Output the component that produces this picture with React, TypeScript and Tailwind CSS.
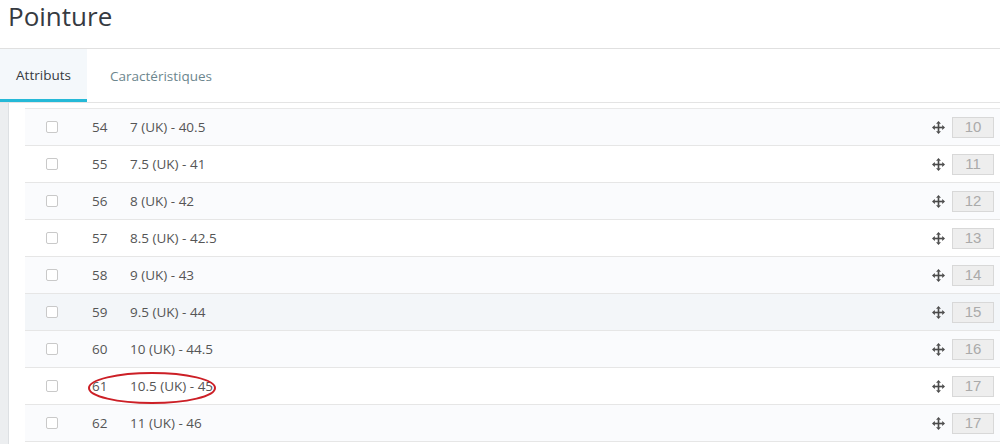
const rows = [
  { id: 54, name: "7 (UK) - 40.5", pos: 10 },
  { id: 55, name: "7.5 (UK) - 41", pos: 11 },
  { id: 56, name: "8 (UK) - 42", pos: 12 },
  { id: 57, name: "8.5 (UK) - 42.5", pos: 13 },
  { id: 58, name: "9 (UK) - 43", pos: 14 },
  { id: 59, name: "9.5 (UK) - 44", pos: 15 },
  { id: 60, name: "10 (UK) - 44.5", pos: 16 },
  { id: 61, name: "10.5 (UK) - 45", pos: 17 },
  { id: 62, name: "11 (UK) - 46", pos: 17 },
];

const MoveIcon = () => (
  <svg width="13" height="13" viewBox="0 0 16 16" className="text-[#4a4a4a]">
    <rect x="7" y="3" width="2" height="10" fill="currentColor" />
    <rect x="3" y="7" width="10" height="2" fill="currentColor" />
    <polygon points="8,0 11,3.5 5,3.5" fill="currentColor" />
    <polygon points="8,16 11,12.5 5,12.5" fill="currentColor" />
    <polygon points="0,8 3.5,5 3.5,11" fill="currentColor" />
    <polygon points="16,8 12.5,5 12.5,11" fill="currentColor" />
  </svg>
);

export default function App() {
  return (
    <div className="w-[1000px] h-[444px] overflow-hidden bg-white font-['Open_Sans',sans-serif] text-[#363a41]">
      <div className="h-[49px] px-2 pt-[2px] flex items-start border-b border-[#e0e0e0]">
        <h1 className="text-[26px] leading-[28px] font-normal text-[#363a41]">Pointure</h1>
      </div>
      <div className="flex h-[54px] border-b border-[#e4e4e4] bg-white">
        <div className="w-[87px] flex items-center justify-center bg-[#f4f8fb] border-b-[3px] border-[#25b9d7] text-[13.5px] text-[#363a41] pt-[2px]">
          Attributs
        </div>
        <div className="px-[23px] flex items-center text-[13.5px] text-[#6c868e] pt-[1px]">
          Caractéristiques
        </div>
      </div>
      <div className="flex h-full">
        <div className="w-[9px] bg-[#eceef0] border-r border-[#dde0e3]" />
        <div className="flex-1 pl-[16px] pt-[5px]">
          <div className="border-t border-[#e8e8e8]">
            {rows.map((r, i) => (
              <div
                key={r.id}
                className={
                  "relative flex items-center h-[37px] border-b border-[#e6e6e6] text-[13.5px] text-[#555] " +
                  (r.id === 59 ? "bg-[#f3f6f9]" : i % 2 === 0 ? "bg-[#fafbfd]" : "bg-white")
                }
              >
                <div className="w-[54px] flex justify-center">
                  <span className="w-[12px] h-[12px] rounded-[2px] border border-[#c9c9c9] bg-white" />
                </div>
                <div className="w-[51px] pl-[13px]">{r.id}</div>
                <div className="flex-1">{r.name}</div>
                <div className="flex items-center gap-[7px] pr-[6px]">
                  <MoveIcon />
                  <div className="w-[42px] h-[21px] flex items-center justify-center bg-[#eeeeee] border border-[#d8d8d8] text-[15px] text-[#aaa] font-['Liberation_Sans',sans-serif]">
                    {r.pos}
                  </div>
                </div>
                {r.id === 61 && (
                  <svg
                    className="absolute left-[61px] top-[2px] w-[132px] h-[36px] pointer-events-none"
                    width="132"
                    height="36"
                    viewBox="0 0 132 36"
                  >
                    <ellipse cx="66" cy="18" rx="63" ry="15" fill="none" stroke="#cc1f26" strokeWidth="2" />
                  </svg>
                )}
              </div>
            ))}
          </div>
        </div>
      </div>
    </div>
  );
}
